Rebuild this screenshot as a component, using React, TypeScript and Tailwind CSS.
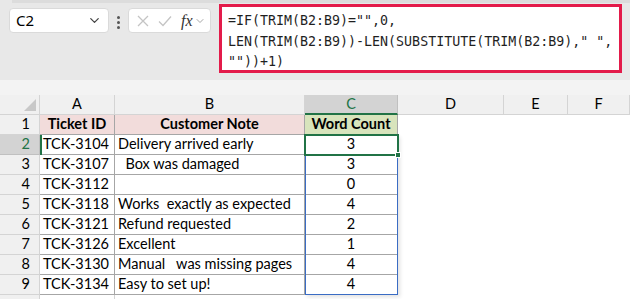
import { ChevronDown } from 'lucide-react'

const rows = [
  { id: 'TCK-3104', note: 'Delivery arrived early', count: 3 },
  { id: 'TCK-3107', note: '  Box was damaged', count: 3 },
  { id: 'TCK-3112', note: '', count: 0 },
  { id: 'TCK-3118', note: 'Works  exactly as expected', count: 4 },
  { id: 'TCK-3121', note: 'Refund requested', count: 2 },
  { id: 'TCK-3126', note: 'Excellent', count: 1 },
  { id: 'TCK-3130', note: 'Manual   was missing pages', count: 4 },
  { id: 'TCK-3134', note: 'Easy to set up!', count: 4 },
]

const cols = ['A', 'B', 'C', 'D', 'E', 'F']

export default function App() {
  return (
    <div className="w-[630px] h-[299px] overflow-hidden bg-white font-['Lato',sans-serif] text-black">
      {/* Formula bar */}
      <div className="h-[80px] bg-[#e8e8e8] relative flex items-start">
        <div className="absolute left-[12px] right-0 top-0 h-[3px] bg-[#dcdcdc]" />
        <div className="mt-[8px] ml-[9px] w-[100px] h-[25px] bg-white rounded-[4px] border border-[#dadada] flex items-center pl-[6px] pr-[6px]">
          <span className="text-[15px] flex-1 font-['Noto_Sans',sans-serif] leading-none">C2</span>
          <ChevronDown size={15} strokeWidth={2} className="text-[#444]" />
        </div>
        <div className="mt-[16px] ml-[8px] flex flex-col gap-[2px]">
          <div className="w-[3px] h-[3px] bg-[#555] rounded-full" />
          <div className="w-[3px] h-[3px] bg-[#555] rounded-full" />
          <div className="w-[3px] h-[3px] bg-[#555] rounded-full" />
        </div>
        <div className="mt-[8px] ml-[8px] w-[83px] h-[25px] bg-white rounded-[4px] border border-[#dadada] flex items-center pl-[8px] gap-[9px]">
          <svg width="12" height="12" viewBox="0 0 12 12" className="shrink-0">
            <path d="M1 1 L11 11 M11 1 L1 11" stroke="#c4c4c4" strokeWidth="1.3" fill="none" />
          </svg>
          <svg width="14" height="12" viewBox="0 0 14 12" className="shrink-0">
            <path d="M1 6.5 L5 10.5 L13 1.5" stroke="#c4c4c4" strokeWidth="1.3" fill="none" />
          </svg>
          <div className="flex items-center gap-[1px]">
            <span className="font-['Liberation_Serif',serif] italic text-[16px] leading-none text-[#333]">fx</span>
            <ChevronDown size={12} strokeWidth={1.5} className="text-[#888]" />
          </div>
        </div>
        <div className="mt-[4px] ml-[8px] w-[403px] h-[69px] bg-white border-[3px] border-[#e31b4a] pl-[6px] pt-[4px]">
          <div className="font-['DejaVu_Sans_Mono',monospace] text-[13.3px] leading-[20.5px] text-[#1f1f1f] whitespace-pre">
            <div>=IF(TRIM(B2:B9)="",0,</div>
            <div>LEN(TRIM(B2:B9))-LEN(SUBSTITUTE(TRIM(B2:B9)," ",</div>
            <div>""))+1)</div>
          </div>
        </div>
      </div>

      {/* gap strip */}
      <div className="h-[15px] bg-[#f3f3f3]" />

      {/* Grid */}
      <div className="relative">
        <div className="grid grid-cols-[40px_75px_190px_93px_106px_64px_1fr] text-[14.5px]">
          {/* column headers */}
          <div className="h-[20px] bg-[#f0f0f0] border-r border-b border-[#d4d4d4] relative">
            <svg width="12" height="12" viewBox="0 0 12 12" className="absolute right-[3px] bottom-[3px]">
              <path d="M12 0 L12 12 L0 12 Z" fill="#c8c8c8" />
            </svg>
          </div>
          {cols.map((c) => (
            <div
              key={c}
              className={
                c === 'C'
                  ? 'h-[20px] bg-[#d3d3d3] border-r border-[#c0c0c0] border-b-2 border-b-[#217346] text-[#217346] flex items-center justify-center leading-none'
                  : 'h-[20px] bg-[#f0f0f0] border-r border-b border-[#d4d4d4] flex items-center justify-center leading-none'
              }
            >
              {c}
            </div>
          ))}

          {/* row 1 */}
          <div className="h-[20px] bg-[#f0f0f0] border-r border-b border-[#d4d4d4] flex items-center justify-end pr-[9px] leading-none">1</div>
          <div className="h-[20px] bg-[#f2dcdb] border-r border-b border-[#a6a6a6] flex items-center justify-center font-bold leading-none">Ticket ID</div>
          <div className="h-[20px] bg-[#f2dcdb] border-r border-b border-[#a6a6a6] flex items-center justify-center font-bold leading-none">Customer Note</div>
          <div className="h-[20px] bg-[#d8e4bc] border-r border-b border-[#a6a6a6] flex items-center justify-center font-bold leading-none">Word Count</div>
          <div className="h-[20px]" />
          <div className="h-[20px]" />
          <div className="h-[20px]" />

          {rows.map((r, i) => (
            <Row key={r.id} n={i + 2} {...r} />
          ))}

          <div className="h-[20px] bg-[#f0f0f0] border-r border-[#d4d4d4]" />
          <div className="h-[20px] border-r border-[#d4d4d4]" />
          <div className="h-[20px]" />
          <div className="h-[20px]" />
          <div className="h-[20px]" />
          <div className="h-[20px]" />
          <div className="h-[20px]" />
        </div>

        {/* referenced range */}
        <div className="absolute left-[305px] top-[40px] w-[93px] h-[160px] border-[1.5px] border-[#3a6cc4] pointer-events-none shadow-[2px_2px_4px_rgba(0,0,0,0.12)]" />
        {/* active cell */}
        <div className="absolute left-[304px] top-[39px] w-[95px] h-[22px] border-2 border-[#217346] pointer-events-none" />
        <div className="absolute left-[395px] top-[57px] w-[6px] h-[6px] bg-[#217346] border border-white pointer-events-none" />
        <div className="absolute left-[40px] top-[40px] w-[2px] h-[20px] bg-[#217346]" />
      </div>
    </div>
  )
}

function Row({ n, id, note, count }: { n: number; id: string; note: string; count: number }) {
  const active = n === 2
  return (
    <>
      <div
        className={
          active
            ? 'h-[20px] bg-[#d3d3d3] border-r border-b border-[#c0c0c0] text-[#217346] flex items-center justify-end pr-[9px] leading-none'
            : 'h-[20px] bg-[#f0f0f0] border-r border-b border-[#d4d4d4] flex items-center justify-end pr-[9px] leading-none'
        }
      >
        {n}
      </div>
      <div className="h-[20px] border-r border-b border-[#a6a6a6] flex items-center pl-[3px] leading-none whitespace-pre">{id}</div>
      <div className="h-[20px] border-r border-b border-[#a6a6a6] flex items-center pl-[3px] leading-none whitespace-pre">{note}</div>
      <div className="h-[20px] border-r border-b border-[#a6a6a6] flex items-center justify-center leading-none">{count}</div>
      <div className="h-[20px]" />
      <div className="h-[20px]" />
      <div className="h-[20px]" />
    </>
  )
}
